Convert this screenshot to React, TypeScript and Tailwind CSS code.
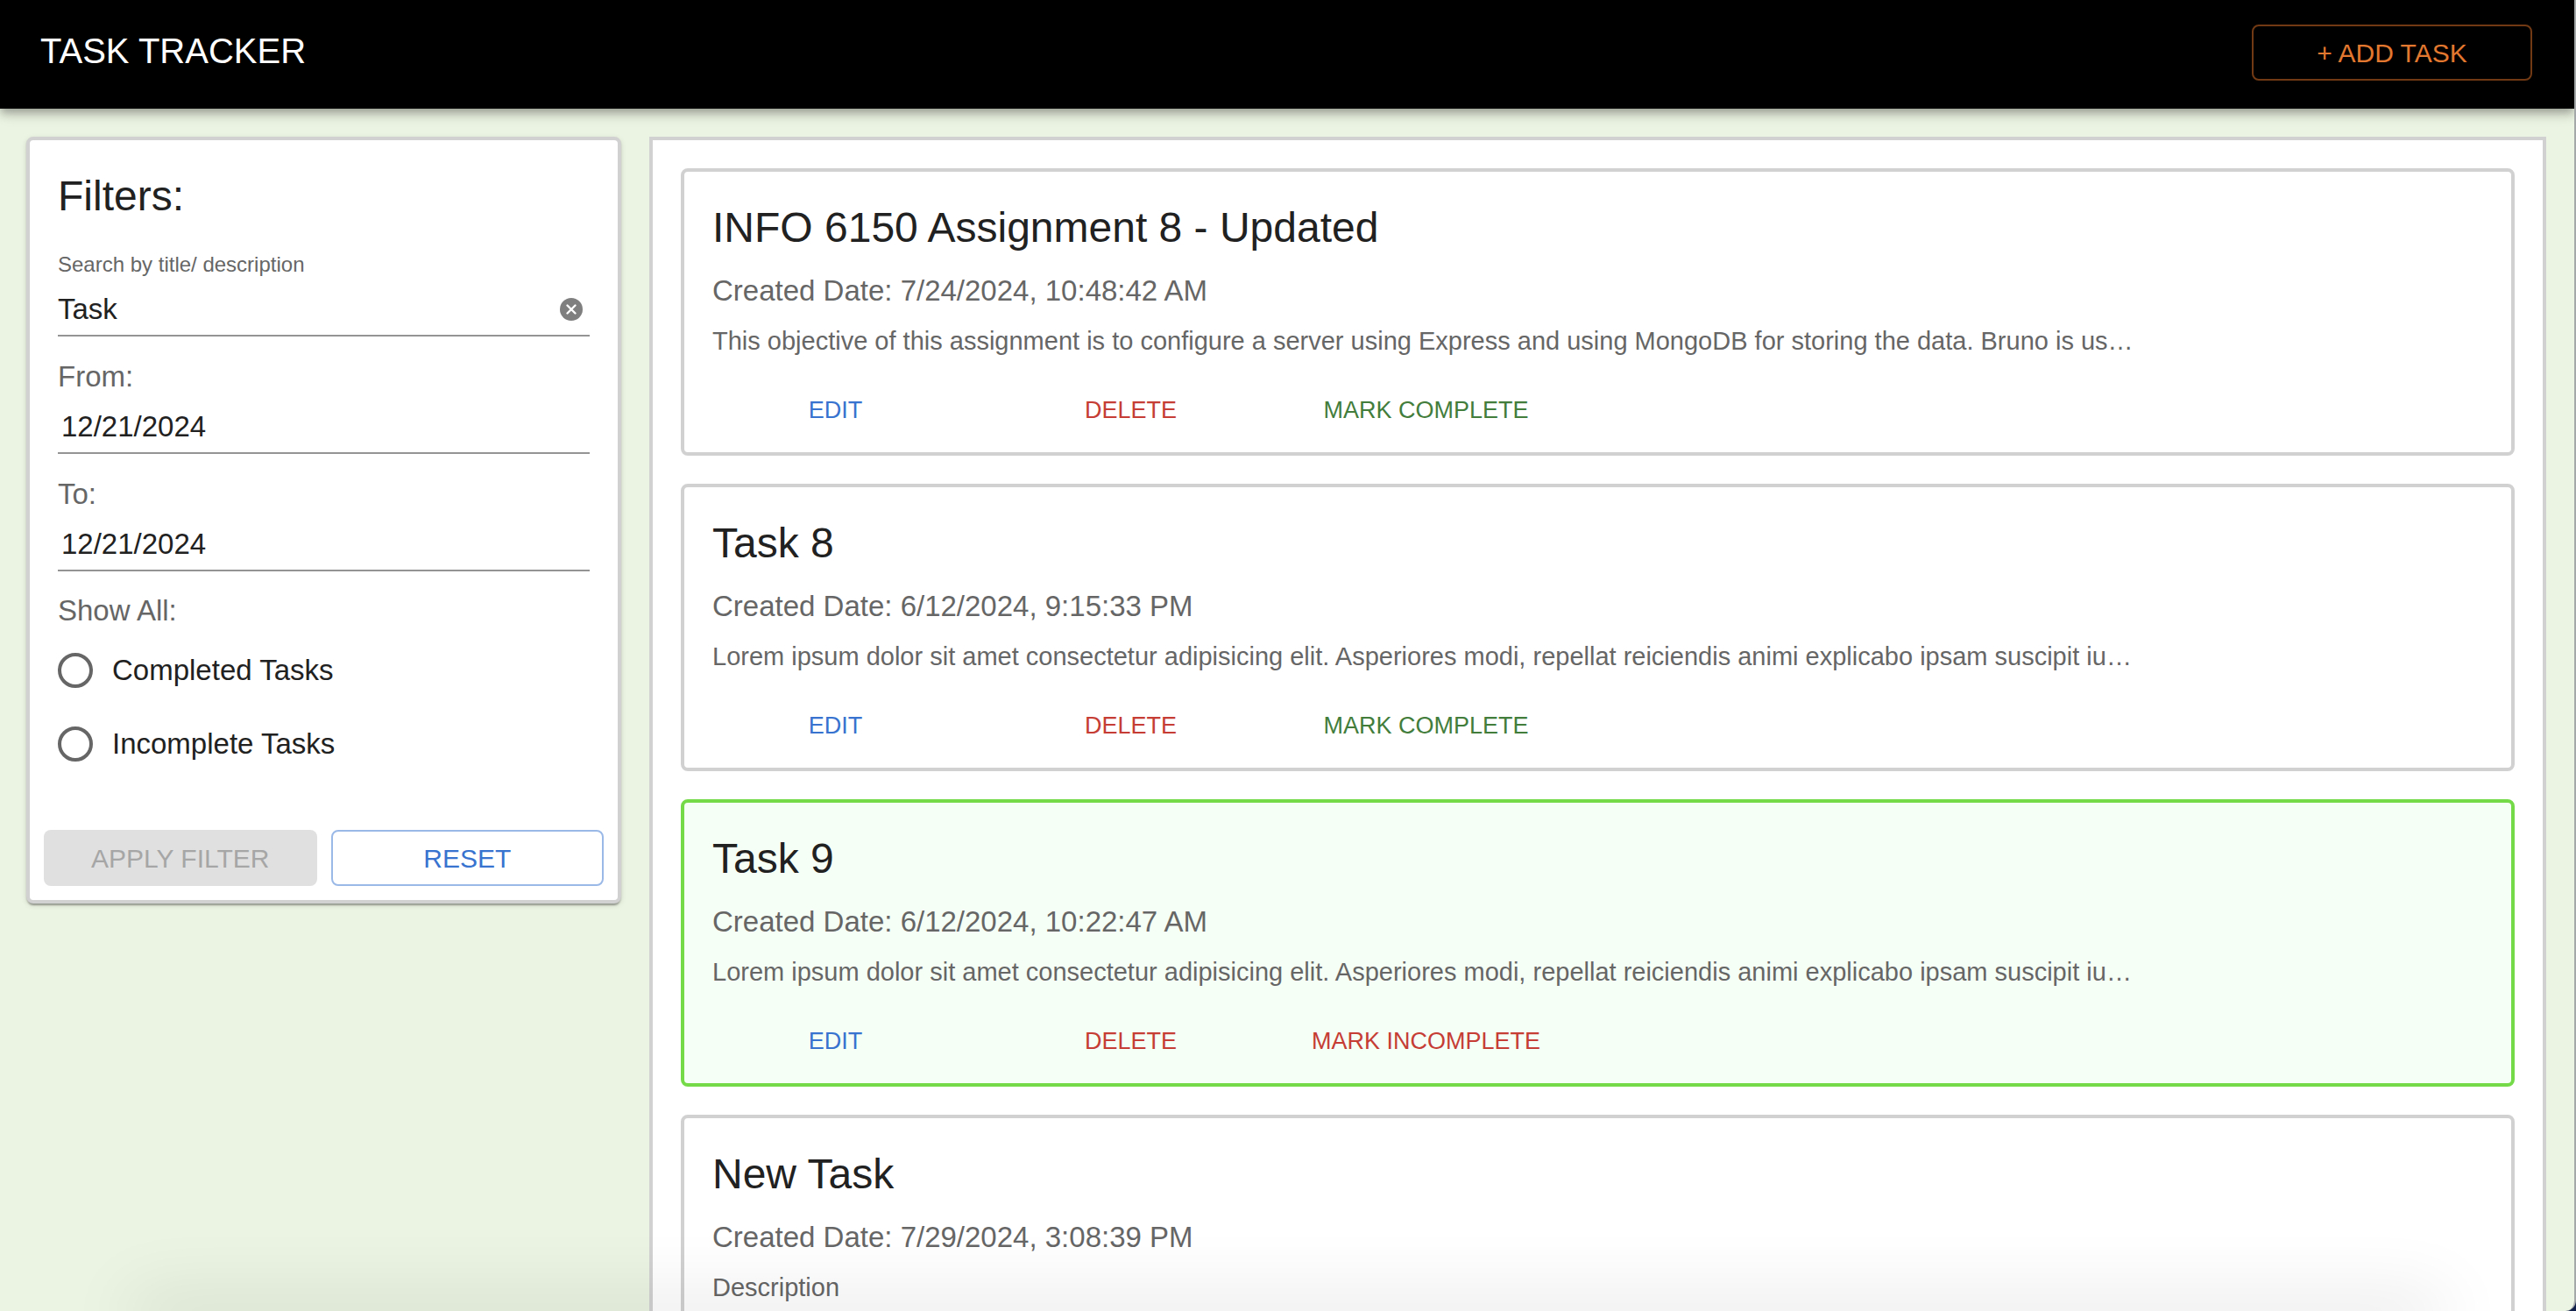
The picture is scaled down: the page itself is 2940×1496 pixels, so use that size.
import React from "react";

type Task = {
  title: string;
  created: string;
  description: string;
  done: boolean;
};

const lorem =
  "Lorem ipsum dolor sit amet consectetur adipisicing elit. Asperiores modi, repellat reiciendis animi explicabo ipsam suscipit iu…";

const tasks: Task[] = [
  {
    title: "INFO 6150 Assignment 8 - Updated",
    created: "7/24/2024, 10:48:42 AM",
    description:
      "This objective of this assignment is to configure a server using Express and using MongoDB for storing the data. Bruno is us…",
    done: false,
  },
  { title: "Task 8", created: "6/12/2024, 9:15:33 PM", description: lorem, done: false },
  { title: "Task 9", created: "6/12/2024, 10:22:47 AM", description: lorem, done: true },
  { title: "New Task", created: "7/29/2024, 3:08:39 PM", description: "Description", done: false },
];

function TaskCard({ task }: { task: Task }) {
  return (
    <article
      className={
        task.done
          ? "rounded-lg border-4 border-[#75da48] bg-[#f6fff5] pb-4"
          : "rounded-lg border-4 border-[#d1d1d1] bg-white pb-4"
      }
    >
      <div className="px-8 pt-8 pb-[26px]">
        <h2 className="text-[48px] leading-16 text-[#212121]">{task.title}</h2>
        <p className="mt-3 text-[33px] leading-14 text-[#666]">Created Date: {task.created}</p>
        <p className="mt-2 text-[29px] leading-[42px] whitespace-nowrap text-[#666]">{task.description}</p>
      </div>
      <div className="grid grid-cols-[repeat(3,337px)] px-1">
        <button type="button" className="h-16 text-[27px] text-[#3873d0]">EDIT</button>
        <button type="button" className="h-16 text-[27px] text-[#c53d35]">DELETE</button>
        {task.done ? (
          <button type="button" className="h-16 text-[27px] text-[#c53d35]">MARK INCOMPLETE</button>
        ) : (
          <button type="button" className="h-16 text-[27px] text-[#437d3c]">MARK COMPLETE</button>
        )}
      </div>
    </article>
  );
}

function DateField({ id, label }: { id: string; label: string }) {
  return (
    <div className="mt-[18px]">
      <label htmlFor={id} className="block text-[33px] leading-14 text-[#666]">
        {label}
      </label>
      <input
        id={id}
        type="text"
        defaultValue="12/21/2024"
        className="block h-[60px] w-full border-b-2 border-[#949494] bg-transparent px-1 text-[33px] text-[#212121] outline-none"
      />
    </div>
  );
}

function RadioOption({ label }: { label: string }) {
  return (
    <label className="flex h-21 items-center gap-[22px] text-[33px] text-[#212121]">
      <input
        type="radio"
        name="status"
        className="size-10 appearance-none rounded-full border-4 border-[#666] bg-white checked:border-[12px]"
      />
      {label}
    </label>
  );
}

export default function App() {
  return (
    <div className="h-screen overflow-hidden bg-[#10204a] font-['Liberation_Sans',Arial,sans-serif]">
      <div className="relative h-full overflow-hidden rounded-br-xl border-r-2 border-[#a5a8a9] bg-[#ebf3e2]">
        <header className="relative flex items-start justify-between bg-black pr-12 pb-8 pl-[46px] pt-7 shadow-[0_4px_8px_-2px_rgba(0,0,0,0.2),0_8px_10px_0_rgba(0,0,0,0.14),0_2px_20px_0_rgba(0,0,0,0.12)]">
          <h1 className="text-[40px] leading-15 text-white">TASK TRACKER</h1>
          <button
            type="button"
            className="h-16 w-80 rounded-lg border-2 border-[#723a14] text-[30px] text-[#e2782f]"
          >
            + ADD TASK
          </button>
        </header>

        <main className="grid grid-cols-[679px_minmax(0,1fr)] items-start gap-8 pt-8 pr-8 pl-[30px]">
          <form
            onSubmit={(e) => e.preventDefault()}
            className="rounded-lg border-4 border-[#d1d1d1] bg-white shadow-[0_4px_2px_-2px_rgba(0,0,0,0.2),0_2px_2px_0_rgba(0,0,0,0.14),0_2px_6px_0_rgba(0,0,0,0.12)]"
          >
            <div className="px-8 pt-8">
              <h2 className="text-[48px] leading-16 text-[#212121]">Filters:</h2>
              <label htmlFor="search" className="mt-8 block text-[24px] leading-7 text-[#666]">
                Search by title/ description
              </label>
              <div className="flex h-[68px] items-center border-b-2 border-[#949494] pt-2 pr-2">
                <input
                  id="search"
                  type="text"
                  defaultValue="Task"
                  className="min-w-0 flex-1 bg-transparent text-[33px] text-[#212121] outline-none"
                />
                <button type="button" aria-label="Clear search">
                  <svg viewBox="0 0 26 26" className="size-[26px]" fill="none">
                    <circle cx="13" cy="13" r="13" fill="#7f7f7f" />
                    <path d="M8.5 8.5 17.5 17.5M17.5 8.5 8.5 17.5" stroke="#fff" strokeWidth="2.4" strokeLinecap="round" />
                  </svg>
                </button>
              </div>
              <DateField id="from" label="From:" />
              <DateField id="to" label="To:" />
              <fieldset className="mt-[18px]">
                <legend className="text-[33px] leading-[53px] text-[#666]">Show All:</legend>
                <RadioOption label="Completed Tasks" />
                <RadioOption label="Incomplete Tasks" />
              </fieldset>
            </div>
            <div className="mt-14 grid grid-cols-2 gap-4 px-4 pb-4">
              <button type="button" disabled className="h-16 rounded-lg bg-[#e0e0e0] text-[30px] text-[#a6a6a6]">
                APPLY FILTER
              </button>
              <button type="reset" className="h-16 rounded-lg border-2 border-[#9bb9e7] text-[30px] text-[#3873d0]">
                RESET
              </button>
            </div>
          </form>

          <section className="flex flex-col gap-8 border-4 border-[#d1d1d1] bg-white p-8">
            {tasks.map((task) => (
              <TaskCard key={task.title} task={task} />
            ))}
          </section>
        </main>

        <div className="pointer-events-none absolute inset-x-40 -bottom-2 h-2 shadow-[0_0_80px_10px_rgba(0,0,0,0.16)]" />
      </div>
    </div>
  );
}
